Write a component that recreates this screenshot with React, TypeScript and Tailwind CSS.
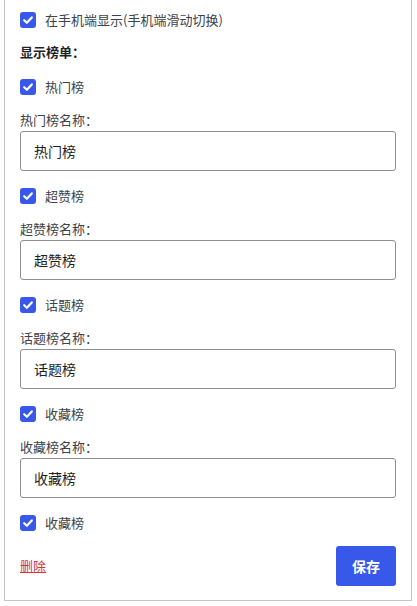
import React from "react";

const font = { fontFamily: '"Noto Sans CJK SC", "Noto Sans", sans-serif' };

function Check({ label, className = "" }: { label: string; className?: string }) {
  return (
    <label className={`flex items-center h-5 gap-[9px] text-[13px] text-[#3c434a] ${className}`}>
      <span className="w-4 h-4 rounded-[3px] bg-[#3858e9] flex items-center justify-center shrink-0">
        <svg width="12" height="12" viewBox="0 0 12 12" fill="none">
          <path d="M2.2 6.2 L4.9 8.8 L9.8 3.4" stroke="white" strokeWidth="2.2" strokeLinecap="round" strokeLinejoin="round" />
        </svg>
      </span>
      <span>{label}</span>
    </label>
  );
}

function Group({ name, last }: { name: string; last?: boolean }) {
  return (
    <>
      <Check label={name} className="mt-[15px]" />
      {!last && (
        <>
          <div className="mt-[13px] h-5 leading-5 text-[13px] text-[#3c434a]">{name}名称：</div>
          <div className="mt-px h-10 border border-[#8c8f94] rounded-[3px] flex items-center px-[13px] text-[14px] text-[#1e1e1e]">
            {name}
          </div>
        </>
      )}
    </>
  );
}

export default function App() {
  return (
    <div className="bg-white w-[417px] h-[606px]" style={font}>
      <div className="ml-1 w-[408px] border-x border-b border-[#c3c4c7] px-[15px] pt-[10px] pb-[14px] flex flex-col">
        <Check label="在手机端显示(手机端滑动切换)" />
        <div className="mt-3 h-5 leading-5 text-[13px] font-bold text-[#1d2327]">显示榜单：</div>
        <Check label="热门榜" className="mt-[15px]" />
        <div className="mt-[13px] h-5 leading-5 text-[13px] text-[#3c434a]">热门榜名称：</div>
        <div className="mt-px h-10 border border-[#8c8f94] rounded-[3px] flex items-center px-[13px] text-[14px] text-[#1e1e1e]">
          热门榜
        </div>
        <Group name="超赞榜" />
        <Group name="话题榜" />
        <Group name="收藏榜" />
        <Group name="收藏榜" last />
        <div className="mt-[13px] flex items-center justify-between">
          <a className="text-[13px] text-[#d63638] underline">删除</a>
          <button className="w-[60px] h-10 rounded-[3px] bg-[#3858e9] text-white text-[14px] font-bold">保存</button>
        </div>
      </div>
    </div>
  );
}
